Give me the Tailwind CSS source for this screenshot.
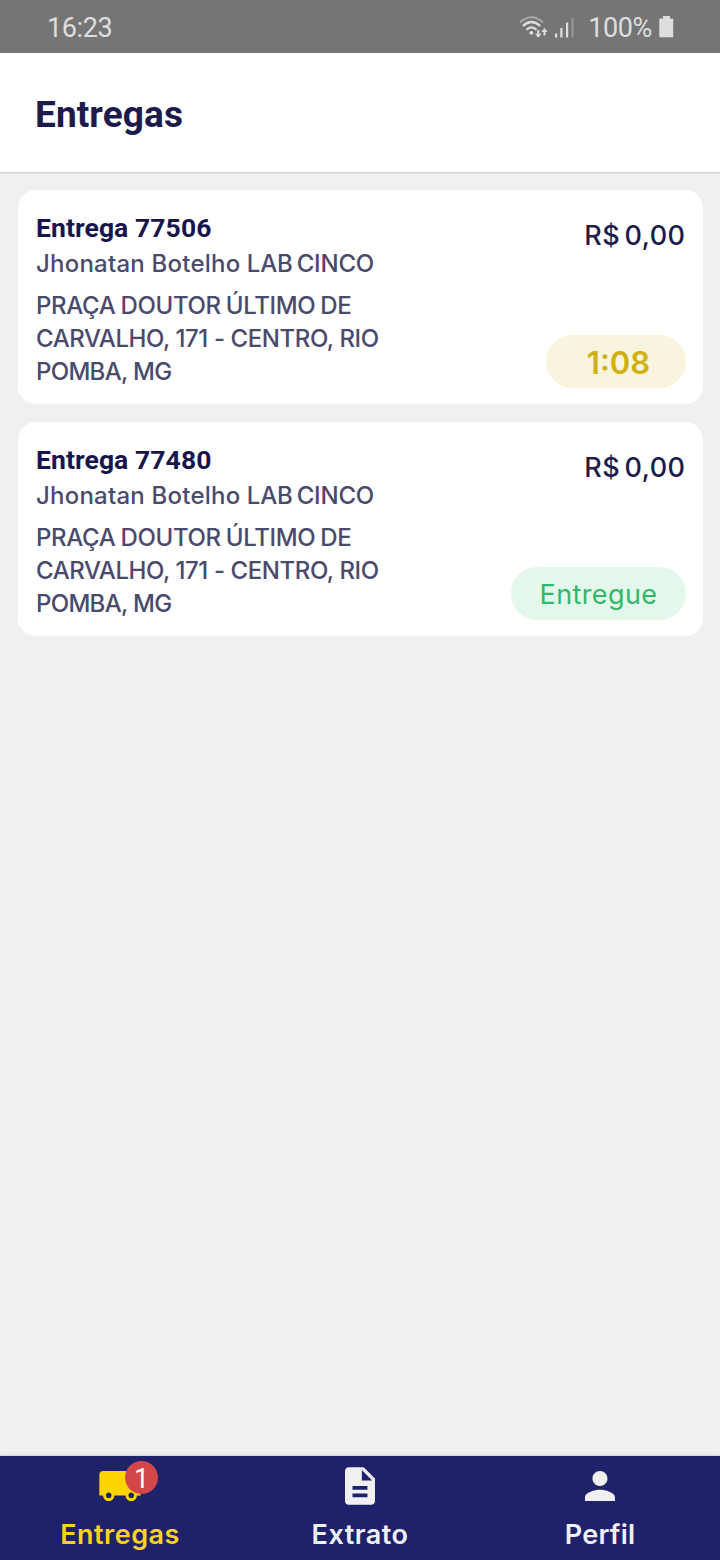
<!DOCTYPE html>
<html lang="pt-BR">
<head>
<meta charset="utf-8">
<title>Entregas</title>
<script src="https://cdn.jsdelivr.net/npm/@tailwindcss/browser@4"></script>
</head>
<body class="bg-[#f0f0f2] font-[Inter,sans-serif]">
<div class="flex h-[1560px] w-[720px] flex-col overflow-hidden whitespace-nowrap">
  <div class="flex h-[53px] shrink-0 items-center justify-between bg-[#757575] pl-[47px] pr-[46px] font-[Roboto,sans-serif] text-[27px] text-[#dedede]">
    <span class="pt-[3px] tracking-[-0.4px]">16:23</span>
    <div class="flex items-center">
      <svg class="h-[24px] w-[30px]" viewBox="0.5 -0.5 30 24" fill="none" stroke="#dedede" stroke-width="2">
        <path d="M1.500 7Q13 -3.500 24.500 7" stroke="#a8a8a8"/>
        <path d="M4.300 10.500Q13 2.500 21.700 10.500M8 14.200Q13 9.500 18 14.200" stroke-width="2.200"/>
        <circle cx="12.800" cy="17.300" r="1.900" fill="#dedede" stroke="none"/>
        <path d="M19.700 14.500v6M26 20V14.500" stroke-width="2"/>
        <path d="M16.500 18.300h6.400L19.700 22.300zM22.800 16.500h6.400L26 12.500z" fill="#dedede" stroke="none"/>
      </svg>
      <svg class="ml-[5px] h-[24px] w-[20px]" viewBox="-0.5 -0.5 20 24" fill="#dedede">
        <path d="M.500 18h2.200v4H.500zM5.800 12.500H8V22H5.800zM11.500 7h2.200v15h-2.200z"/>
        <path d="M17 2h2v20h-2z" fill="#999"/>
      </svg>
      <span class="ml-[14px] pt-[3px] tracking-[-0.4px]">100%</span>
      <svg class="ml-[7px] h-[22px] w-[15px]" viewBox="0 0 15 22" fill="#dedede"><path d="M4 0h7v2.500h2.500q.7 0 .7.700v17.300q0 .7-.7.700H1q-.7 0-.7-.7V3.200q0-.7.7-.7h3z"/></svg>
    </div>
  </div>
  <header class="flex h-[119px] shrink-0 items-center bg-white pl-[35px] pt-[4px] font-[Roboto,sans-serif] text-[37px] font-bold tracking-[0.1px] text-[#1d1b4c] shadow-[0_1px_2px_rgba(0,0,0,0.16)]"><h1>Entregas</h1></header>
  <main class="flex flex-1 flex-col gap-[18px] pl-[18px] pr-[17px] pt-[18px]">
    <article class="flex h-[214px] justify-between rounded-[18px] bg-white px-[18px]">
      <div class="flex flex-col items-start pt-[22px] text-[24px] font-medium leading-[33px] text-[#4a4a6c]">
        <h2 class="font-[Roboto,sans-serif] text-[26.500px] font-bold leading-[32px] tracking-[0.080px] text-[#17154a]">Entrega 77506</h2>
        <p class="mt-[3px]"><span class="tracking-[0.22px]">Jhonatan Botelho</span> <span class="tracking-[-0.2px] [word-spacing:-2px]">LAB CINCO</span></p>
        <p class="mt-[9px] tracking-[-0.350px] [word-spacing:-1px]">PRAÇA DOUTOR ÚLTIMO DE</p>
        <p class="tracking-[-0.420px]">CARVALHO, 171 - CENTRO, RIO</p>
        <p class="tracking-[-0.700px]">POMBA, MG</p>
      </div>
      <div class="flex flex-col items-end justify-between pb-[16px] pt-[28px]">
        <p class="-mr-[0.5px] text-[27px] font-medium leading-[36px] tracking-[0.5px] text-[#1d1b4c] [word-spacing:-3.500px]">R$ 0,00</p>
        <div class="-mr-px flex h-[53px] w-[140px] items-center justify-center rounded-full bg-[#f9f4dd] pl-[5px] pt-[4px] text-[31px] font-semibold text-[#cfb112]"><span>1:08</span></div>
      </div>
    </article>
    <article class="flex h-[214px] justify-between rounded-[18px] bg-white px-[18px]">
      <div class="flex flex-col items-start pt-[22px] text-[24px] font-medium leading-[33px] text-[#4a4a6c]">
        <h2 class="font-[Roboto,sans-serif] text-[26.500px] font-bold leading-[32px] tracking-[0.080px] text-[#17154a]">Entrega 77480</h2>
        <p class="mt-[3px]"><span class="tracking-[0.22px]">Jhonatan Botelho</span> <span class="tracking-[-0.2px] [word-spacing:-2px]">LAB CINCO</span></p>
        <p class="mt-[9px] tracking-[-0.350px] [word-spacing:-1px]">PRAÇA DOUTOR ÚLTIMO DE</p>
        <p class="tracking-[-0.420px]">CARVALHO, 171 - CENTRO, RIO</p>
        <p class="tracking-[-0.700px]">POMBA, MG</p>
      </div>
      <div class="flex flex-col items-end justify-between pb-[16px] pt-[28px]">
        <p class="-mr-[0.5px] text-[27px] font-medium leading-[36px] tracking-[0.5px] text-[#1d1b4c] [word-spacing:-3.500px]">R$ 0,00</p>
        <div class="-mr-px flex h-[53px] w-[175px] items-center justify-center rounded-full bg-[#e3f7eb] pt-[3px] text-[27px] tracking-[0.4px] text-[#32b86b]"><span>Entregue</span></div>
      </div>
    </article>
  </main>
  <nav class="grid h-[104px] shrink-0 grid-cols-3 bg-[#20216b] text-[27px] font-semibold text-[#f0f0f5] shadow-[0_-1px_2px_rgba(0,0,0,0.15)]">
    <div class="flex flex-col items-center pt-[8px] text-[#fbd31e]">
      <div class="relative h-[45px] w-[46px]">
        <svg class="h-[45px] w-[45px]" viewBox="-0.25 0.25 24 24" fill="#ffd500"><path d="M20 8h-3V4H3c-1.100 0-2 .900-2 2v11h2c0 1.660 1.340 3 3 3s3-1.340 3-3h6c0 1.660 1.340 3 3 3s3-1.340 3-3h2v-5l-3-4zM6 18.500c-.830 0-1.500-.670-1.500-1.500s.670-1.500 1.500-1.500 1.500.670 1.500 1.500-.670 1.500-1.500 1.500zm12 0c-.830 0-1.500-.670-1.500-1.500s.670-1.500 1.500-1.500 1.500.670 1.500 1.500-.670 1.500-1.500 1.500z"/></svg>
        <span class="absolute left-[28px] top-[-3px] flex h-[33px] w-[33px] items-center justify-center rounded-full bg-[#d34748] pt-[3px] font-[Roboto,sans-serif] text-[27px] font-normal leading-none text-white">1</span>
      </div>
      <span class="mt-[9px] leading-[34px] tracking-[0.5px]">Entregas</span>
    </div>
    <div class="flex flex-col items-center pt-[8px]">
      <div class="h-[45px] w-[46px]"><svg class="h-[45px] w-[45px]" viewBox="-0.25 0.25 24 24" fill="#f0f0f2"><path d="M14 2H6c-1.100 0-1.990.900-1.990 2L4 20c0 1.100.890 2 1.990 2H18c1.100 0 2-.900 2-2V8l-6-6zm2 16H8v-2h8v2zm0-4H8v-2h8v2zm-3-5V3.500L18.500 9H13z"/></svg></div>
      <span class="mt-[9px] leading-[34px] tracking-[0.5px]">Extrato</span>
    </div>
    <div class="flex flex-col items-center pt-[8px]">
      <div class="h-[45px] w-[46px]"><svg class="h-[45px] w-[45px]" viewBox="-0.25 0.25 24 24" fill="#f0f0f2"><path d="M12 12c2.210 0 4-1.790 4-4s-1.790-4-4-4-4 1.790-4 4 1.790 4 4 4zm0 2c-2.670 0-8 1.340-8 4v2h16v-2c0-2.660-5.330-4-8-4z"/></svg></div>
      <span class="mt-[9px] leading-[34px] tracking-[0.2px]">Perfil</span>
    </div>
  </nav>
</div>
</body>
</html>
